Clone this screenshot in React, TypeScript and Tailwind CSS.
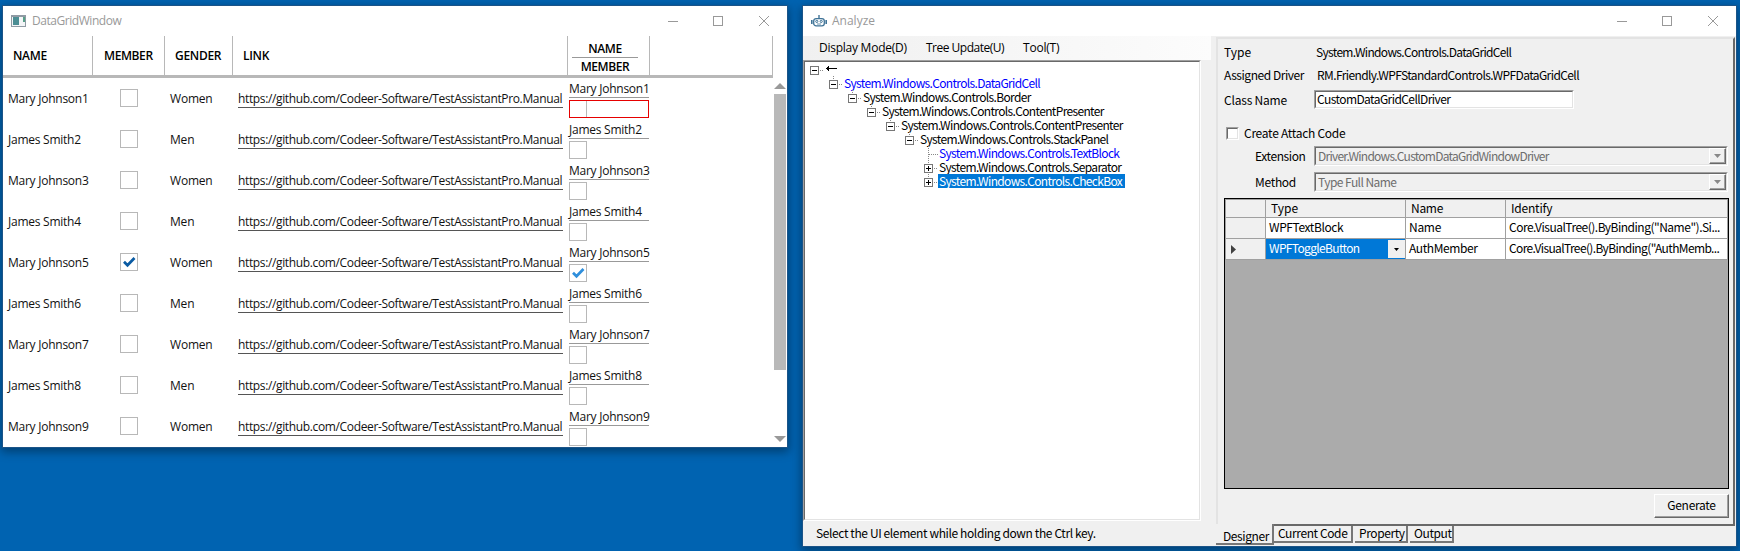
import React from "react";

const SEGOE = "font-['Open_Sans','Noto_Sans',sans-serif] text-[12px]";
const GOTHIC = "font-['Noto_Sans_CJK_JP',sans-serif] text-[12px]";

function Controls() {
  return (
    <svg className="mr-[17px] h-[12px] w-[102px] shrink-0" viewBox="0 0 102 12" fill="none" stroke="#999" shapeRendering="crispEdges">
      <path d="M0 6.5H10M45.5 1.5H54.5V10.5H45.5Z" />
      <path d="M91 1L101 11M101 1L91 11" shapeRendering="auto" />
    </svg>
  );
}

function Check({ mark, color, className = "" }: { mark?: boolean; color?: string; className?: string }) {
  return (
    <div className={`h-[18px] w-[18px] shrink-0 border border-[#b8b8b8] ${className}`}>
      {mark && (
        <svg viewBox="0 0 16 16" className="h-4 w-4" fill="none" stroke={color} strokeWidth="2.7">
          <path d="M3 7.8L6.5 11.3L13.5 4" />
        </svg>
      )}
    </div>
  );
}

const people = [1, 2, 3, 4, 5, 6, 7, 8, 9].map((n) => ({
  name: (n % 2 ? "Mary Johnson" : "James Smith") + n,
  gender: n % 2 ? "Women" : "Men",
  member: n === 5,
}));

function HeadCell({ w, children }: { w: string; children?: React.ReactNode }) {
  return <div className={`flex shrink-0 items-center border-r border-[#b8b8b8] ${w}`}>{children}</div>;
}

function DataGridWindow() {
  return (
    <div className={`ml-[3px] mt-[6px] flex h-[441px] w-[784px] shrink-0 flex-col bg-white shadow-[0_0_0_1px_#1b5488,0_3px_9px_2px_rgba(0,0,0,0.35)] ${SEGOE}`}>
      <div className="flex h-[30px] shrink-0 items-center">
        <svg className="ml-2 h-3 w-[15px]" viewBox="0 0 15 12">
          <rect width="15" height="12" fill="#8f9aa3" />
          <rect x="1" y="2" width="13" height="9" fill="#f3f5f7" />
          <rect x="2" y="2" width="6" height="8" fill="#4c8e94" />
          <rect x="12" y="2" width="2" height="5" fill="#57a088" />
        </svg>
        <span className="ml-[6px] flex-1 tracking-[-0.45px] text-[#999]">DataGridWindow</span>
        <Controls />
      </div>
      <div className="flex h-[42px] w-[770px] shrink-0 border-b-[3px] border-[#b8b8b8] font-semibold text-black">
        <HeadCell w="w-[90px] pl-[10px]"><span className="tracking-[-0.3px]">NAME</span></HeadCell>
        <HeadCell w="w-[72px] pl-[11px]"><span className="tracking-[-0.4px]">MEMBER</span></HeadCell>
        <HeadCell w="w-[68px] pl-[10px]"><span className="tracking-[-0.3px]">GENDER</span></HeadCell>
        <HeadCell w="w-[335px] pl-[10px]"><span className="tracking-[-0.3px]">LINK</span></HeadCell>
        <HeadCell w="w-[82px] pl-[4px]">
          <div className="flex w-[66px] flex-col items-center pt-1 leading-[17px] tracking-[-0.4px]">
            <span className="h-[17px]">NAME</span>
            <div className="h-px w-full bg-[#999]" />
            <span className="h-[17px]">MEMBER</span>
          </div>
        </HeadCell>
        <HeadCell w="w-[123px]" />
      </div>
      <div className="flex min-h-0 flex-1">
        <div className="w-[771px] text-[#111]">
          {people.map((p, i) => (
            <div key={p.name} className="flex h-[41px]">
              <div className="w-[117px] pl-[5px] leading-[42px]"><span className="tracking-[-0.25px]">{p.name}</span></div>
              <Check mark={p.member} color="#0a5ba3" className="mt-[11px]" />
              <div className="w-[100px] pl-8 leading-[42px]"><span className="tracking-[-0.2px]">{p.gender}</span></div>
              <div className="mt-[12px] h-[18px] w-[325px] whitespace-nowrap border-b border-[#555] leading-[18px]">
                <span className="tracking-[-0.36px]">https://github.com/Codeer-Software/TestAssistantPro.Manual</span>
              </div>
              <div className="ml-[6px] w-[80px]">
                <div className="mt-[2px] h-[18px] whitespace-nowrap border-b border-[#999] leading-[17px]"><span className="tracking-[-0.25px]">{p.name}</span></div>
                <div className={`mt-[2px] h-[18px] ${i === 0 ? "border border-[#e60000]" : ""}`}>
                  {i === 0 ? <div className="h-4 w-[17px] border-r border-[#b8b8b8]" /> : <Check mark={p.member} color="#2f8fdc" />}
                </div>
              </div>
            </div>
          ))}
        </div>
        <div className="flex w-3 flex-col">
          <svg className="mt-[5px] h-[6px] w-3" viewBox="0 0 12 6"><path d="M0 6L6 0L12 6Z" fill="#999" /></svg>
          <div className="mt-[5px] h-[276px] bg-[#b9b9b9]" />
          <svg className="mt-[66px] h-[6px] w-3" viewBox="0 0 12 6"><path d="M0 0L6 6L12 0Z" fill="#999" /></svg>
        </div>
      </div>
    </div>
  );
}

const nodes = [
  { d: 0, t: "←", box: "-", c: "text-black" },
  { d: 1, t: "System.Windows.Controls.DataGridCell", box: "-", c: "text-[#0000ff]" },
  { d: 2, t: "System.Windows.Controls.Border", box: "-", c: "text-black" },
  { d: 3, t: "System.Windows.Controls.ContentPresenter", box: "-", c: "text-black" },
  { d: 4, t: "System.Windows.Controls.ContentPresenter", box: "-", c: "text-black" },
  { d: 5, t: "System.Windows.Controls.StackPanel", box: "-", c: "text-black" },
  { d: 6, t: "System.Windows.Controls.TextBlock", box: "", c: "text-[#0000ff]" },
  { d: 6, t: "System.Windows.Controls.Separator", box: "+", c: "text-black" },
  { d: 6, t: "System.Windows.Controls.CheckBox", box: "+", c: "bg-[#0078d7] text-white" },
];

function Tree() {
  return (
    <div>
      {nodes.map((n, i) => (
        <div key={i} className="flex h-[14px]" style={{ paddingLeft: 4 + n.d * 19 }}>
          <svg className="h-[14px] w-[14px] shrink-0" viewBox="0 0 14 14" fill="none" shapeRendering="crispEdges">
            {n.d > 0 && <path d="M4.5 0V4" stroke="#888" strokeDasharray="1 1" />}
            {n.box === "" && <path d="M4.5 0V14M5 8.5H14" stroke="#888" strokeDasharray="1 1" />}
            {n.box !== "" && (
              <>
                <path d="M10 8.5H14" stroke="#888" strokeDasharray="1 1" />
                <rect x="0.5" y="4.5" width="8" height="8" stroke="#777" fill="#fff" />
                <path d={n.box === "+" ? "M2 8.5H7M4.5 6V11" : "M2 8.5H7"} stroke="#000" />
              </>
            )}
          </svg>
          <span className={`h-[14px] whitespace-nowrap pl-px pr-[3px] leading-[14px] ${n.c}`}>
            {i === 0 ? (
              <svg className="mt-[3px] h-[7px] w-3" viewBox="0 0 12 7" fill="none" stroke="#000" shapeRendering="crispEdges"><path d="M1 3.5H12M4 1.5L1.5 3.5L4 5.5" /></svg>
            ) : (
              <span className="tracking-[-0.66px]">{n.t}</span>
            )}
          </span>
        </div>
      ))}
    </div>
  );
}

const SUNKEN = "border border-t-[#a0a0a0] border-l-[#a0a0a0] border-r-white border-b-white";
const SUNKEN_IN = "border border-t-[#696969] border-l-[#696969] border-r-[#e3e3e3] border-b-[#e3e3e3]";
const RAISED = "border border-t-white border-l-white border-r-[#696969] border-b-[#696969] shadow-[inset_-1px_-1px_0_#a0a0a0]";

function Combo({ children }: { children: React.ReactNode }) {
  return (
    <div className={`h-5 w-[414px] ${SUNKEN}`}>
      <div className={`flex h-[18px] items-center ${SUNKEN_IN}`}>
        <span className="flex-1 pl-[2px] leading-4 text-[#6d6d6d]">{children}</span>
        <div className={`flex h-4 w-[17px] items-center justify-center ${RAISED}`}>
          <svg className="h-1 w-[7px]" viewBox="0 0 7 4"><path d="M0 0H7L3.5 4Z" fill="#888" /></svg>
        </div>
      </div>
    </div>
  );
}

function Grid() {
  const cell = "shrink-0 overflow-hidden whitespace-nowrap border-r border-b border-[#a0a0a0]";
  return (
    <div className="ml-[6px] mt-[6px] h-[291px] w-[505px] border border-black bg-[#ababab]">
      <div className="flex h-[19px] border-l border-t border-[#a0a0a0] bg-[#f0f0f0] leading-[16px]">
        <div className={`${cell} w-[40px]`} />
        <div className={`${cell} w-[140px] pl-[5px]`}>Type</div>
        <div className={`${cell} w-[100px] pl-[5px] tracking-[-0.3px]`}>Name</div>
        <div className={`${cell} w-[222px] pl-[5px] tracking-[-0.2px]`}>Identify</div>
      </div>
      <div className="flex h-[21px] border-l border-[#a0a0a0] bg-white leading-[18px]">
        <div className={`${cell} w-[40px] bg-[#f0f0f0]`} />
        <div className={`${cell} w-[140px] pl-[3px]`}><span className="tracking-[-0.4px]">WPFTextBlock</span></div>
        <div className={`${cell} w-[100px] pl-[3px] tracking-[-0.3px]`}>Name</div>
        <div className={`${cell} w-[222px] pl-[3px]`}><span className="tracking-[-0.5px]">Core.VisualTree().ByBinding("Name").Si...</span></div>
      </div>
      <div className="flex h-[21px] border-l border-[#a0a0a0] bg-white leading-[18px]">
        <div className={`${cell} flex w-[40px] items-center bg-[#f0f0f0] pl-[5px]`}>
          <svg className="h-[9px] w-[5px]" viewBox="0 0 5 9"><path d="M0 0L5 4.5L0 9Z" fill="#404040" /></svg>
        </div>
        <div className={`${cell} flex w-[140px] bg-[#0078d7] pl-[3px] text-white`}>
          <span className="flex-1 tracking-[-0.65px]">WPFToggleButton</span>
          <div className="mt-px flex h-[18px] w-[17px] items-center justify-center bg-[#f0f0f0]">
            <svg className="h-[3px] w-[5px]" viewBox="0 0 5 3"><path d="M0 0H5L2.5 3Z" fill="#000" /></svg>
          </div>
        </div>
        <div className={`${cell} w-[100px] pl-[3px]`}><span className="tracking-[-0.4px]">AuthMember</span></div>
        <div className={`${cell} w-[222px] pl-[3px]`}><span className="tracking-[-0.62px]">Core.VisualTree().ByBinding("AuthMemb...</span></div>
      </div>
    </div>
  );
}

function AnalyzeWindow() {
  return (
    <div className={`ml-4 mt-[6px] flex h-[540px] w-[933px] shrink-0 flex-col bg-[#f0f0f0] text-black shadow-[0_0_0_1px_#1b5488,0_3px_9px_2px_rgba(0,0,0,0.35)] ${GOTHIC}`}>
      <div className="flex h-[30px] shrink-0 items-center bg-white">
        <svg className="ml-2 h-3 w-4" viewBox="0 0 16 12" fill="none" stroke="#3f7397">
          <path d="M8 0V3" strokeWidth="1.4" />
          <rect x="2.7" y="3.6" width="10.6" height="7.2" rx="2.4" strokeWidth="1.3" />
          <path d="M.8 5V9M15.2 5V9" strokeWidth="1.6" />
          <circle cx="5.8" cy="6.4" r="1.1" /><circle cx="10.2" cy="6.4" r="1.1" /><path d="M6 9H10" strokeWidth=".8" />
        </svg>
        <span className={`ml-[5px] flex-1 text-[#999] ${SEGOE}`}>Analyze</span>
        <Controls />
      </div>
      <div className="flex min-h-0 flex-1">
        <div className="flex w-[408px] flex-col">
          <div className={`flex h-6 items-center bg-linear-to-r from-[#f0f0f0] to-[#fcfcfc] ${SEGOE}`}>
            <span className="ml-4 w-[107px] tracking-[-0.25px]">Display Mode(D)</span>
            <span className="w-[97px] tracking-[-0.5px]">Tree Update(U)</span>
            <span className="tracking-[-0.2px]">Tool(T)</span>
          </div>
          <div className={`h-[461px] w-[398px] ${SUNKEN}`}>
            <div className={`h-[459px] bg-white pl-px ${SUNKEN_IN}`}><Tree /></div>
          </div>
          <div className="pl-[13px] pt-[4px] leading-4"><span className="tracking-[-0.39px]">Select the UI element while holding down the Ctrl key.</span></div>
        </div>
        <div className="ml-[5px] flex w-[519px] flex-col">
          <div className="mt-px h-[489px] shrink-0 border-2 border-l-[#e3e3e3] border-t-[#e3e3e3] border-r-[#696969] border-b-[#696969]">
            <div className="flex h-[23px] items-center pl-[6px] pt-[2px]"><span className="w-[92px]">Type</span><span className="tracking-[-0.68px]">System.Windows.Controls.DataGridCell</span></div>
            <div className="flex h-[23px] items-center pl-[6px] pt-[2px]"><span className="w-[93px] tracking-[-0.45px]">Assigned Driver</span><span className="tracking-[-0.6px]">RM.Friendly.WPFStandardControls.WPFDataGridCell</span></div>
            <div className="mt-[5px] flex h-[19px] items-center pl-[6px]">
              <span className="w-[90px] tracking-[-0.2px]">Class Name</span>
              <div className={`h-[19px] w-[260px] ${SUNKEN}`}><div className={`h-[17px] bg-white pl-px leading-[14px] ${SUNKEN_IN}`}><span className="tracking-[-0.58px]">CustomDataGridCellDriver</span></div></div>
            </div>
            <div className="mt-[16px] flex h-[16px] items-center pl-2">
              <div className={`h-[13px] w-[13px] ${SUNKEN}`}><div className={`h-[11px] bg-white ${SUNKEN_IN}`} /></div>
              <span className="ml-[5px] tracking-[-0.28px]">Create Attach Code</span>
            </div>
            <div className="mt-[5px] flex h-5 items-center pl-[37px]"><span className="w-[59px] shrink-0 tracking-[-0.4px]">Extension</span><Combo><span className="tracking-[-0.76px]">Driver.Windows.CustomDataGridWindowDriver</span></Combo></div>
            <div className="mt-[6px] flex h-5 items-center pl-[37px]"><span className="w-[59px] shrink-0 tracking-[-0.3px]">Method</span><Combo><span className="tracking-[-0.55px]">Type Full Name</span></Combo></div>
            <Grid />
            <div className="mt-[5px] flex justify-end pr-[4px]">
              <div className={`flex h-6 w-[75px] items-center justify-center pb-[2px] tracking-[-0.3px] ${RAISED}`}>Generate</div>
            </div>
          </div>
          <div className="flex h-5 whitespace-nowrap leading-[14px] tracking-[-0.4px]">
            <div className="-mt-[2px] h-[21px] w-[58px] border-b-2 border-r-2 border-[#777] bg-[#f0f0f0] pl-[7px] pt-[4px] leading-[16px]">Designer</div>
            <div className="h-[17px] w-[79px] border-b-2 border-r-2 border-[#777] pl-1">Current Code</div>
            <div className="ml-[2px] h-[17px] w-[53px] border-b-2 border-r-2 border-[#777] pl-1">Property</div>
            <div className="ml-[2px] h-[17px] w-[44px] border-b-2 border-r-2 border-[#777] pl-1">Output</div>
          </div>
        </div>
      </div>
    </div>
  );
}

export default function App() {
  return (
    <div className="flex h-[551px] w-[1740px] items-start overflow-hidden bg-[#0063b1]">
      <DataGridWindow />
      <AnalyzeWindow />
    </div>
  );
}
